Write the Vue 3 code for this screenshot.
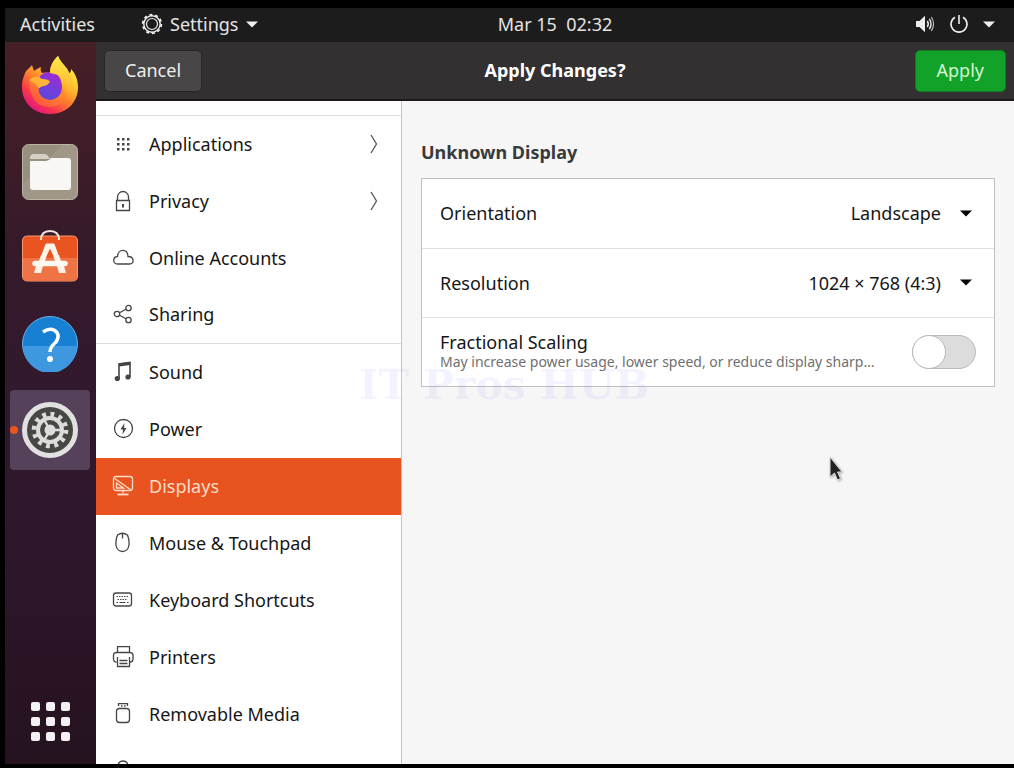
<script setup>
import { ref } from 'vue'

const items = [
  { id: 'applications', label: 'Applications', more: true },
  { id: 'privacy', label: 'Privacy', more: true },
  { id: 'online', label: 'Online Accounts' },
  { id: 'sharing', label: 'Sharing', divider: true },
  { id: 'sound', label: 'Sound' },
  { id: 'power', label: 'Power' },
  { id: 'displays', label: 'Displays' },
  { id: 'mouse', label: 'Mouse & Touchpad' },
  { id: 'keyboard', label: 'Keyboard Shortcuts' },
  { id: 'printers', label: 'Printers' },
  { id: 'media', label: 'Removable Media' },
  { id: 'color', label: 'Color' }
]
const active = ref('displays')
const orientation = ref('Landscape')
const resolution = ref('1024 × 768 (4:3)')
const fractional = ref(false)
const grid3 = [0, 1, 2]
</script>

<template>
  <div class="screen">
    <header class="topbar">
      <div class="topbar-left">
        <button class="plain">Activities</button>
        <button class="plain app-menu">
          <svg width="22" height="22" viewBox="0 0 22 22" fill="none" stroke="#eee">
            <circle cx="11" cy="11" r="8.200" stroke-width="1.400" />
            <circle cx="11" cy="11" r="5.500" stroke-width="1.200" />
            <circle cx="11" cy="11" r="9.300" stroke-width="1.800" stroke-dasharray="3 2.843" />
          </svg>
          <span>Settings</span>
          <svg class="caret" width="12" height="7" viewBox="0 0 12 7"><path d="M0 0.5h12L6 6.5z" fill="#eee" /></svg>
        </button>
      </div>
      <button class="plain clock">Mar 15&nbsp; 02:32</button>
      <button class="plain tray" aria-label="System menu">
        <svg width="20" height="20" viewBox="0 0 20 20" fill="none" stroke="#eee">
          <path d="M1 7h3.5L10 1.8v16.4L4.500 13H1z" fill="#eee" stroke="none" />
          <path d="M12.300 7q2 3 0 6" stroke-width="1.500" />
          <path d="M14.300 4.800q3.500 5.200 0 10.400" stroke-width="1.400" />
          <path d="M16.300 3q4.500 7 0 14" stroke-width="1.200" stroke="#bbb" />
        </svg>
        <svg width="20" height="20" viewBox="0 0 20 20" fill="none" stroke="#eee" stroke-width="1.600">
          <path d="M6 3.200a8 8 0 1 0 8 0M10 1v9" />
        </svg>
        <svg width="12" height="7" viewBox="0 0 12 7"><path d="M0 0.5h12L6 6.5z" fill="#eee" /></svg>
      </button>
    </header>

    <nav class="dock" aria-label="Dock">
      <button class="dock-item" aria-label="Firefox">
        <svg width="56" height="60" viewBox="0 0 56 60">
          <defs>
            <linearGradient id="fx" x1="0.85" y1="0.1" x2="0.25" y2="0.95">
              <stop offset="0" stop-color="#fff04f" /><stop offset="0.3" stop-color="#ffc52e" />
              <stop offset="0.58" stop-color="#ff7b2d" /><stop offset="0.82" stop-color="#f9354e" /><stop offset="1" stop-color="#e3197c" />
            </linearGradient>
            <linearGradient id="fp" x1="0.7" y1="0" x2="0.3" y2="1">
              <stop offset="0" stop-color="#a02ad0" /><stop offset="1" stop-color="#544be0" />
            </linearGradient>
            <linearGradient id="fl" x1="0" y1="0" x2="0" y2="1">
              <stop offset="0" stop-color="#ffe94a" /><stop offset="1" stop-color="#ffae2b" />
            </linearGradient>
          </defs>
          <path d="M36 0C39 8 45 10 47 17C49 17 49 14 49 13C54 18 56 25 56 31C56 47 44 58 28 58S0 47 0 31C0 24 2 20 3 17C4 14 8 12 10 9L12 15C14 13 17 12 19 11C18 14 19 16 20 17Q24 16 28 17C28 9 32 4 36 0Z" fill="url(#fx)" />
          <path d="M18 20Q24 14 33 17Q39 20 40 30Q40 43 28 44Q17 43 16 32Z" fill="url(#fp)" />
          <path d="M36 0C39 8 45 10 47 17Q54 29 46 39Q50 27 38 20Q34 18 28 17C28 9 32 4 36 0Z" fill="url(#fl)" />
          <path d="M7 25Q12 23 18 26Q16 31 17 37Q20 43 28 44Q39 43 41 31Q45 40 39 47Q30 54 18 49Q8 43 7 25Z" fill="#ff8a2b" opacity="0.5" />
          <path d="M7 24Q14 18 20 23Q27 23 28 26Q26 29 22 30Q17 31 17 33Q15 28 7 24Z" fill="#ffb437" />
        </svg>
      </button>
      <button class="dock-item" aria-label="Files">
        <svg width="56" height="56" viewBox="0 0 56 56">
          <rect x="0.500" y="0.500" width="55" height="55" rx="6" fill="#98907f" stroke="#bab4a5" />
          <path d="M1 40L40 1H50q5 0 5 5V50q0 5-5 5H6q-5 0-5-5z" fill="#a59d8d" opacity=".6" />
          <path d="M8 14q0-4 4-4h10q3 0 4 2l2 3h-20z" fill="#d4d0c4" />
          <path d="M8 17H24q3 0 5-3H46q3 0 3 3V43q0 3-3 3H11q-3 0-3-3z" fill="#f8f7f3" />
        </svg>
      </button>
      <button class="dock-item" aria-label="Ubuntu Software">
        <svg width="56" height="56" viewBox="0 2 56 56">
          <path d="M0.500 13q0-5 5-5h45q5 0 5 5v35q0 5-5 5h-45q-5 0-5-5z" fill="#e95420" stroke="#f39a72" />
          <path d="M1 30h54v18q0 4.500-4.500 4.500h-45Q1 52.500 1 48z" fill="#ee7345" />
          <path d="M19 12q0-9 9-9t9 9" fill="none" stroke="#f2e3d8" stroke-width="2" />
          <path d="M24 16h8l4 11h-4.500L28 19.500 24.500 27H20z" fill="#fff3e8" stroke="#fff3e8" />
          <path d="M19 27h6l-3 9h-6zM31 27h6l3 9h-6z" fill="#fff3e8" />
          <path d="M13 35.500h30" stroke="#fff8f0" stroke-width="5.500" stroke-linecap="round" />
          <path d="M14 38h7l-2 7h-7zM35 38h7l2 7h-7z" fill="#fff3e8" />
        </svg>
      </button>
      <button class="dock-item" aria-label="Help">
        <svg width="56" height="56" viewBox="0 0 56 56">
          <circle cx="28" cy="28" r="27.500" fill="#1780d2" stroke="#69b2ea" />
          <path d="M1 30h54a27 27 0 0 1-54 0z" fill="#3d98df" />
          <path d="M21 16Q27 12 32 14Q39 18 34 26Q28 31 28 36" fill="none" stroke="#fff" stroke-width="3.500" />
          <circle cx="28" cy="43" r="3" fill="#fff" />
        </svg>
      </button>
      <button class="dock-item running" aria-label="Settings">
        <svg width="56" height="56" viewBox="0 0 56 56">
          <circle cx="28" cy="28" r="25.500" fill="#474844" stroke="#e2e1e2" stroke-width="5" />
          <circle cx="28" cy="28" r="12" fill="none" stroke="#dddcdc" stroke-width="4" />
          <circle cx="28" cy="28" r="15.800" fill="none" stroke="#dddcdc" stroke-width="5" stroke-dasharray="3.800 4.473" />
          <circle cx="28" cy="28" r="5.500" fill="#dddcdc" />
          <path d="M28 28h12M28 28l-6-10.500M28 28l-6 10.500" stroke="#dddcdc" stroke-width="2.500" />
        </svg>
      </button>
      <button class="dock-item show-apps" aria-label="Show Applications">
        <svg width="40" height="40" viewBox="0 0 40 40">
          <template v-for="r in grid3" :key="r">
            <rect v-for="c in grid3" :key="c" :x="1 + c * 15" :y="1 + r * 15" width="9" height="9" rx="2" fill="#f4f1f4" />
          </template>
        </svg>
      </button>
    </nav>

    <main class="window">
      <header class="headerbar">
        <button class="btn cancel">Cancel</button>
        <h1>Apply Changes?</h1>
        <button class="btn apply">Apply</button>
      </header>

      <nav class="sidebar" aria-label="Settings panels">
        <div class="scrolled"></div>
        <button
          v-for="item in items"
          :key="item.id"
          class="row"
          :class="{ active: active === item.id, divider: item.divider }"
          @click="active = item.id"
        >
          <svg class="icon" width="22" height="22" viewBox="0 0 22 22" fill="none" stroke="currentColor" stroke-width="1.300">
            <g v-if="item.id === 'applications'" fill="currentColor" stroke="none">
              <template v-for="r in grid3" :key="r">
                <rect v-for="c in grid3" :key="c" :x="5 + c * 5" :y="5 + r * 5" width="2.500" height="2.500" />
              </template>
            </g>
            <g v-else-if="item.id === 'privacy'">
              <path d="M4.500 10.500h13v10h-13zM5.500 10V7a5.500 5.500 0 0 1 11 0v3" />
              <path d="M11 14v3.500" stroke-width="2" />
            </g>
            <path v-else-if="item.id === 'online'" d="M5.500 17C.5 17 .5 10 5.500 9.500C6 1.500 15.500 1 16 9.500C22.500 9.500 22.500 17 17.500 17Z" />
            <g v-else-if="item.id === 'sharing'">
              <circle cx="5" cy="11" r="2.700" /><circle cx="16.500" cy="5" r="2.700" /><circle cx="16.500" cy="17" r="2.700" />
              <path d="M7.500 9.700l6.500-3.500M7.500 12.300l6.500 3.500" />
            </g>
            <g v-else-if="item.id === 'sound'">
              <path d="M7 18V3l11-1.500V16" stroke-width="1.600" /><path d="M7 4l11-1.500" stroke-width="3" />
              <circle cx="5.300" cy="17.500" r="2.600" fill="currentColor" stroke="none" /><circle cx="16" cy="16" r="2.600" fill="currentColor" stroke="none" />
            </g>
            <g v-else-if="item.id === 'power'">
              <circle cx="11.500" cy="10.500" r="9" /><path d="M12.500 5L8.500 11.500h2.500l-.5 5 4-6.500H12z" fill="currentColor" stroke="none" />
            </g>
            <g v-else-if="item.id === 'displays'">
              <rect x="1.500" y="1.500" width="19" height="14" rx="2.500" /><path d="M2 3l17 12M4.500 8v5h7zM11 15.500v3" /><path d="M5.500 19.500h11" stroke-width="1.800" />
            </g>
            <g v-else-if="item.id === 'mouse'">
              <path d="M5.500 3Q10.500-.5 15.500 3Q17.500 8 17 13Q16 19.500 10.500 19.500T4 13Q3.500 8 5.500 3Z" /><path d="M10.500 1.500v5" />
            </g>
            <g v-else-if="item.id === 'keyboard'">
              <rect x="1.500" y="4" width="18" height="13" rx="2.500" />
              <path d="M4.500 7.500h12M5.500 10.500h10" stroke-dasharray="1.500 1" stroke-width="1.200" /><path d="M4.500 13.500h1.500M7.500 13.500h6M15 13.500h1.500" stroke-width="1.200" />
            </g>
            <g v-else-if="item.id === 'printers'">
              <path d="M5.500 6.500v-6h12v6M4.500 16Q1.500 16 1.500 13V9.500q0-3 3-3h13.500q3 0 3 3V13q0 3-3 3M5.500 11v9.500h12V11M7.500 14.500h8M7.500 17.500h8" />
            </g>
            <g v-else-if="item.id === 'media'">
              <rect x="4.500" y="5.500" width="13" height="14" rx="3" /><path d="M6.500 3V.5h9V3M9 3h1.500M12 3h1.500" />
            </g>
            <path v-else d="M11 1Q16 1 16 7v10q-5 4-10 0V7Q6 1 11 1Z" />
          </svg>
          <span>{{ item.label }}</span>
          <svg v-if="item.more" class="chevron" width="8" height="20" viewBox="0 0 8 20" fill="none" stroke="#555" stroke-width="1.300">
            <path d="M1 1l5.500 9L1 19" />
          </svg>
        </button>
      </nav>

      <section class="content">
        <h2>Unknown Display</h2>
        <div class="panel">
          <div class="field">
            <label for="orientation">Orientation</label>
            <div class="combo">
              <select id="orientation" v-model="orientation">
                <option>Landscape</option>
                <option>Portrait Right</option>
                <option>Portrait Left</option>
              </select>
              <svg width="12" height="7" viewBox="0 0 12 7"><path d="M0 0.5h12L6 6.500z" /></svg>
            </div>
          </div>
          <div class="field">
            <label for="resolution">Resolution</label>
            <div class="combo">
              <select id="resolution" v-model="resolution">
                <option>1024 × 768 (4:3)</option>
                <option>800 × 600 (4:3)</option>
              </select>
              <svg width="12" height="7" viewBox="0 0 12 7"><path d="M0 0.5h12L6 6.500z" /></svg>
            </div>
          </div>
          <div class="field">
            <label class="scaling" for="fractional">
              <span>Fractional Scaling</span>
              <small>May increase power usage, lower speed, or reduce display sharp…</small>
            </label>
            <input id="fractional" v-model="fractional" class="switch" type="checkbox" role="switch" />
          </div>
        </div>
      </section>
    </main>

    <div class="watermark" aria-hidden="true">IT Pros HUB</div>
    <svg class="pointer" width="18" height="26" viewBox="0 0 18 26">
      <path d="M2 1v20l4.500-4 3 7 3-1.500-3-6.500H14z" fill="#222" stroke="#ddd" stroke-width="1" />
    </svg>
  </div>
</template>

<style>
body {
  margin: 0;
  background: #000;
}
</style>

<style scoped>
.screen {
  box-sizing: border-box;
  position: relative;
  height: 100vh;
  padding: 8px 0 4px 5px;
  display: grid;
  grid-template: 34px minmax(0, 1fr) / 91px minmax(0, 1fr);
  overflow: hidden;
  background: #000;
  color: #161616;
  font-family: "Noto Sans", "Open Sans", sans-serif;
  font-size: 18px;
  line-height: 24px;
}
button,
select {
  margin: 0;
  padding: 0;
  border: 0;
  background: none;
  color: inherit;
  font: inherit;
}
svg {
  display: block;
  flex: none;
}

.topbar {
  box-sizing: border-box;
  grid-column: 1 / 3;
  display: grid;
  grid-template-columns: 91px 1fr auto 1fr;
  align-items: center;
  padding-bottom: 2px;
  background: #1c1c1c;
  color: #e4e4e4;
}
.topbar-left {
  grid-column: 1 / 3;
  display: flex;
  gap: 46px;
  padding-left: 15px;
}
.app-menu,
.tray {
  display: flex;
  align-items: center;
  gap: 7px;
}
.tray {
  justify-self: end;
  gap: 14px;
  padding-right: 19px;
}

.dock {
  display: flex;
  flex-direction: column;
  align-items: center;
  gap: 6px;
  padding: 4px 1px 3px 0;
  background: linear-gradient(#471f26, #351a2b 30%, #2f172d 65%, #25121f 100%);
}
.dock-item {
  position: relative;
  width: 80px;
  height: 80px;
  display: grid;
  place-items: center;
  border-radius: 4px;
}
.running {
  background: #55415a;
}
.running::before {
  content: "";
  position: absolute;
  left: 0;
  width: 8px;
  height: 8px;
  border-radius: 50%;
  background: #e95420;
}
.show-apps {
  margin-top: auto;
}

.window {
  display: grid;
  grid-template: 59px minmax(0, 1fr) / 306px minmax(0, 1fr);
  background: #f6f6f6;
}
.headerbar {
  box-sizing: border-box;
  grid-column: 1 / 3;
  display: grid;
  grid-template-columns: 1fr auto 1fr;
  align-items: center;
  padding: 0 8px;
  border-bottom: 2px solid #1d191b;
  background: #323031;
}
h1,
h2 {
  margin: 0;
  font-size: 18px;
  font-weight: 700;
}
h1 {
  padding-bottom: 2px;
  color: #fff;
}
.btn {
  justify-self: start;
  height: 42px;
  padding: 0 20px 2px;
  border: 1px solid #292728;
  border-radius: 5px;
  background: #484647;
  color: #eee;
}
.apply {
  justify-self: end;
  padding: 0 21px 2px;
  border-color: #127c20;
  background: #12a22a;
  color: #d5f7d4;
}

.sidebar {
  border-right: 1px solid #c4c4c4;
  background: #fff;
  overflow: hidden;
}
.scrolled {
  height: 14px;
  border-bottom: 1px solid #ddd;
}
.row {
  box-sizing: border-box;
  display: flex;
  align-items: center;
  gap: 15px;
  width: 100%;
  height: 57px;
  padding: 0 23px 2px 16px;
  text-align: left;
}
.row.divider {
  border-bottom: 1px solid #ddd;
}
.row.active {
  background: #e8531f;
  color: #ffdcc6;
}
.icon {
  color: #454545;
}
.active .icon {
  color: inherit;
}
.chevron {
  margin-left: auto;
}

.content {
  padding: 39px 19px;
}
h2 {
  color: #3a3a3a;
}
.panel {
  margin-top: 14px;
  border: 1px solid #bfbfbf;
  background: #fff;
}
.field {
  box-sizing: border-box;
  display: flex;
  align-items: center;
  justify-content: space-between;
  gap: 16px;
  height: 69px;
  padding: 0 18px 1px;
}
.field + .field {
  border-top: 1px solid #e0e0e0;
}
.combo {
  display: grid;
  align-items: center;
}
.combo > * {
  grid-area: 1 / 1;
}
.combo select {
  appearance: none;
  padding-right: 35px;
  text-align-last: right;
}
.combo svg {
  justify-self: end;
  margin-right: 4px;
  pointer-events: none;
}
.scaling {
  flex: 1;
  min-width: 0;
  display: flex;
  flex-direction: column;
}
.scaling span {
  line-height: 20px;
}
small {
  overflow: hidden;
  color: #707070;
  font-size: 14px;
  line-height: 20px;
  text-overflow: ellipsis;
  white-space: nowrap;
}
.switch {
  appearance: none;
  flex: none;
  box-sizing: border-box;
  width: 64px;
  height: 34px;
  margin: 0;
  border: 1px solid #b9b9b9;
  border-radius: 17px;
  background: #dcdcdc;
}
.switch::before {
  content: "";
  display: block;
  box-sizing: border-box;
  width: 34px;
  height: 34px;
  margin: -1px;
  border: 1px solid #b9b9b9;
  border-radius: 50%;
  background: #fff;
}
.switch:checked {
  background: #12a22a;
}
.switch:checked::before {
  margin-left: 29px;
}

.watermark {
  position: absolute;
  left: 359px;
  top: 361px;
  color: rgba(130, 130, 255, 0.1);
  font: bold 41px/48px "DejaVu Serif", serif;
  white-space: nowrap;
  pointer-events: none;
}
.pointer {
  position: absolute;
  left: 828px;
  top: 456px;
  pointer-events: none;
  filter: drop-shadow(1px 1px 1px rgba(0, 0, 0, 0.3));
}
</style>
